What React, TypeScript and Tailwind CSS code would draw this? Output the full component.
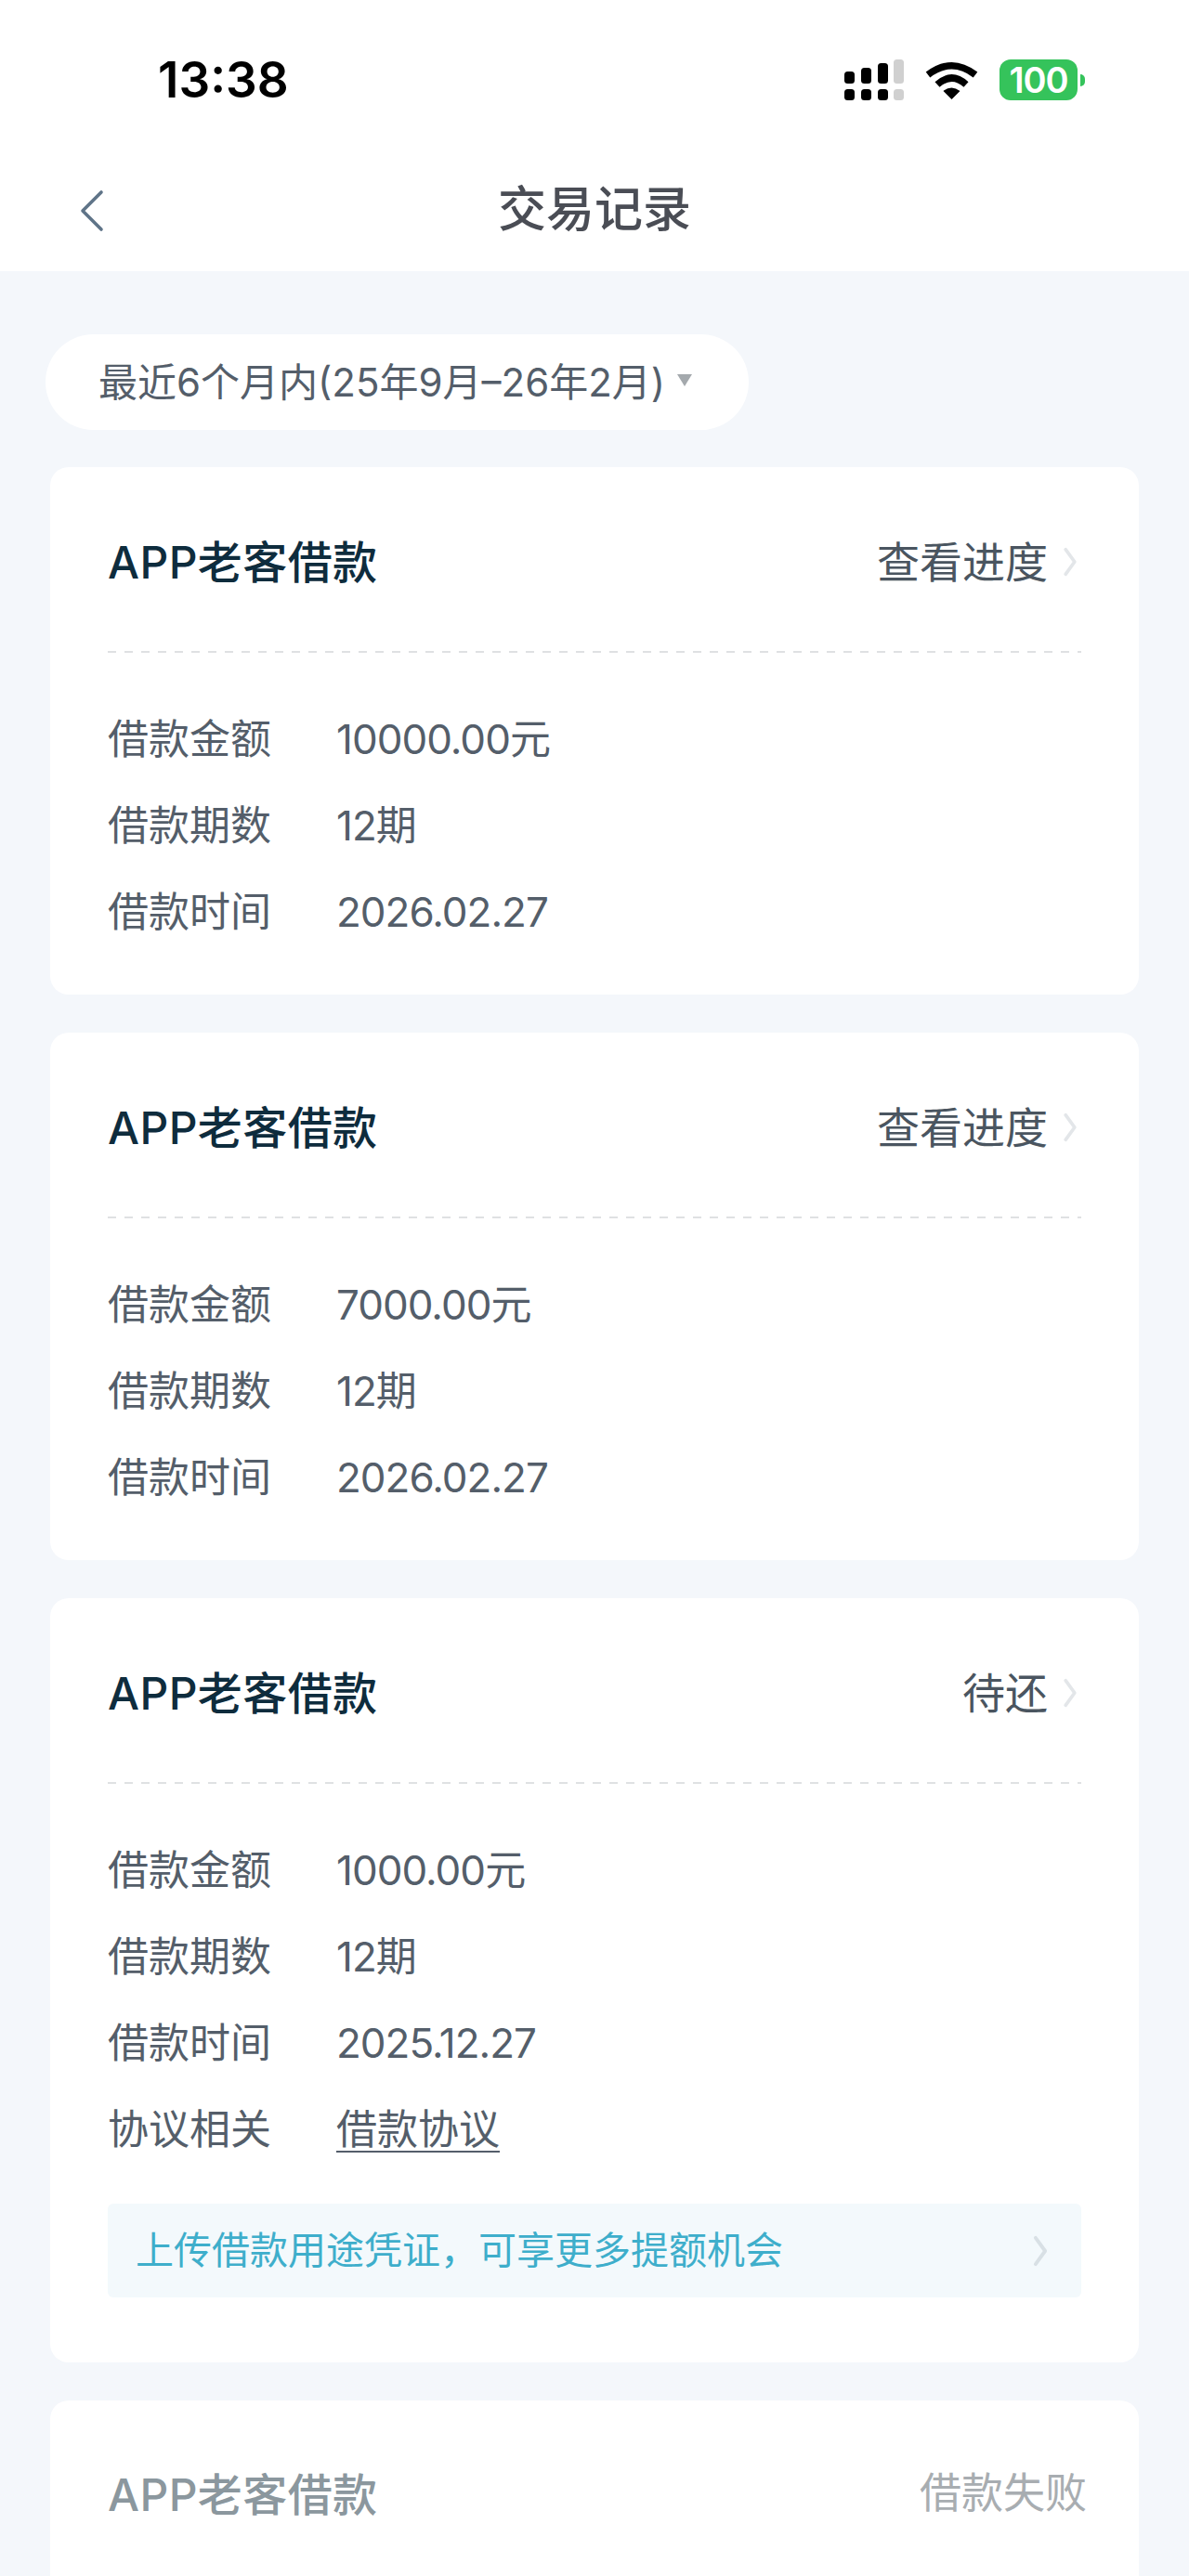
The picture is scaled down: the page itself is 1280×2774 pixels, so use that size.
const FONT = "font-['Inter','Noto_Sans_CJK_SC',sans-serif]";

interface Row {
  label: string;
  value: string;
  link?: boolean;
}

interface LoanCardProps {
  status: string;
  rows: Row[];
  banner?: boolean;
}

function Chevron({ className }: { className: string }) {
  return (
    <svg className={className} viewBox="0 0 14 28" fill="none" stroke="currentColor" strokeWidth="3" strokeLinecap="round" strokeLinejoin="round">
      <path d="M3 3l8 11-8 11" />
    </svg>
  );
}

function SignalIcon() {
  return (
    <svg width="64" height="44" viewBox="0 0 64 44">
      <rect x="0" y="13" width="11" height="13" rx="3.5" fill="#000" />
      <rect x="18" y="9" width="11" height="17" rx="3.5" fill="#000" />
      <rect x="36" y="4" width="11" height="22" rx="3.5" fill="#000" />
      <rect x="53" y="0" width="11" height="26" rx="3.5" fill="#d0d0d0" />
      <rect x="0" y="32" width="11" height="12" rx="3.5" fill="#000" />
      <rect x="18" y="32" width="11" height="12" rx="3.5" fill="#000" />
      <rect x="36" y="32" width="11" height="12" rx="3.5" fill="#000" />
      <rect x="53" y="32" width="11" height="12" rx="3.5" fill="#d0d0d0" />
    </svg>
  );
}

function WifiIcon() {
  return (
    <svg width="57" height="41" viewBox="0 0 57 41" fill="none">
      <path d="M3 14.5Q28.5 -5 54 14.5" stroke="#000" strokeWidth="7.5" />
      <path d="M13 25Q28.5 11 44 25" stroke="#000" strokeWidth="7.5" />
      <path d="M19.5 32Q28.5 25 37.5 32L28.5 41Z" fill="#000" />
    </svg>
  );
}

function StatusBar() {
  return (
    <div className="h-[172px] flex items-center justify-between pl-[170px] pr-[112px]">
      <span className="text-[53px] leading-none font-semibold text-black">13:38</span>
      <div className="flex items-center">
        <SignalIcon />
        <div className="ml-[23px]">
          <WifiIcon />
        </div>
        <div className="ml-[23px] flex items-center">
          <div className="w-[84px] h-[44px] rounded-[12px] bg-[#35c35b] flex items-center justify-center text-white text-[38px] leading-none font-semibold tracking-[-1px]">
            100
          </div>
          <div className="w-[5px] h-[13px] ml-[3px] rounded-r-full bg-[#35c35b]" />
        </div>
      </div>
    </div>
  );
}

function NavBar() {
  return (
    <div className="relative h-[120px] pb-[12px] flex items-center justify-center">
      <svg className="absolute left-[85px] top-[32px]" width="27" height="46" viewBox="0 0 27 46" fill="none" stroke="#5f7488" strokeWidth="3.6" strokeLinecap="round" strokeLinejoin="round">
        <path d="M24 3L4 23l20 20" />
      </svg>
      <h1 className="text-[52px] leading-none font-medium text-[#4a4d55]">交易记录</h1>
    </div>
  );
}

function LoanCard({ status, rows, banner }: LoanCardProps) {
  return (
    <div className="bg-white rounded-[20px] px-[62px]">
      <div className="h-[198px] pt-[8px] flex items-center justify-between">
        <span className="text-[48px] leading-none font-medium text-[#0e2c3d] tracking-[0.4px]">APP老客借款</span>
        <div className="flex items-center -mt-[2px]">
          <span className="text-[46px] leading-none text-[#4a5560]">{status}</span>
          <Chevron className="ml-[14px] mr-[2px] w-[20px] h-[34px] text-[#e3e6e9]" />
        </div>
      </div>
      <div className="h-[2px] bg-[repeating-linear-gradient(90deg,#dfe1e3_0,#dfe1e3_9px,transparent_9px,transparent_18px)]" />
      <div className="pt-[67px] pb-[63px] flex flex-col gap-[41px]">
        {rows.map((row) => (
          <div key={row.label} className="flex items-center h-[52px] text-[44px] leading-none text-[#545e6a]">
            <span className="w-[246px]">{row.label}</span>
            <span className={row.link ? "underline underline-offset-[7px] decoration-2" : "tracking-[-1px]"}>{row.value}</span>
          </div>
        ))}
      </div>
      {banner && (
        <div className="-mt-[9px] mb-[70px] h-[101px] rounded-[6px] bg-[#f3f9fc] pl-[30px] pr-[34px] flex items-center justify-between">
          <span className="text-[41px] leading-none text-[#3eaecb]">{"上传借款用途凭证\uFF0C可享更多提额机会"}</span>
          <Chevron className="w-[20px] h-[36px] text-[#d8e0e5]" />
        </div>
      )}
    </div>
  );
}

export default function App() {
  return (
    <div className={`${FONT} w-[1280px] h-[2774px] overflow-hidden bg-[#f4f7fb]`}>
      <div className="bg-white">
        <StatusBar />
        <NavBar />
      </div>
      <div className="pl-[49px] pt-[68px]">
        <div className="w-[757px] h-[103px] rounded-full bg-white pl-[57px] flex items-center text-[42px] leading-none text-[#545e6a]">
          <span>最近6个月内(25年9月–26年2月)</span>
          <span className="ml-[13px] mt-[-4px] w-0 h-0 border-x-[8px] border-x-transparent border-t-[13px] border-t-[#a4a9ad]" />
        </div>
      </div>
      <div className="mt-[40px] mx-[54px] flex flex-col gap-[41px]">
        <LoanCard
          status="查看进度"
          rows={[
            { label: "借款金额", value: "10000.00元" },
            { label: "借款期数", value: "12期" },
            { label: "借款时间", value: "2026.02.27" },
          ]}
        />
        <LoanCard
          status="查看进度"
          rows={[
            { label: "借款金额", value: "7000.00元" },
            { label: "借款期数", value: "12期" },
            { label: "借款时间", value: "2026.02.27" },
          ]}
        />
        <LoanCard
          status="待还"
          banner
          rows={[
            { label: "借款金额", value: "1000.00元" },
            { label: "借款期数", value: "12期" },
            { label: "借款时间", value: "2025.12.27" },
            { label: "协议相关", value: "借款协议", link: true },
          ]}
        />
        <div className="bg-white rounded-[20px] h-[400px] px-[62px] pt-[78px] flex items-start justify-between">
          <span className="text-[48px] leading-none font-medium text-[#8b979e] tracking-[0.4px]">APP老客借款</span>
          <span className="text-[45px] leading-none text-[#a8adb1] mr-[-6px] -mt-[1px]">借款失败</span>
        </div>
      </div>
    </div>
  );
}
